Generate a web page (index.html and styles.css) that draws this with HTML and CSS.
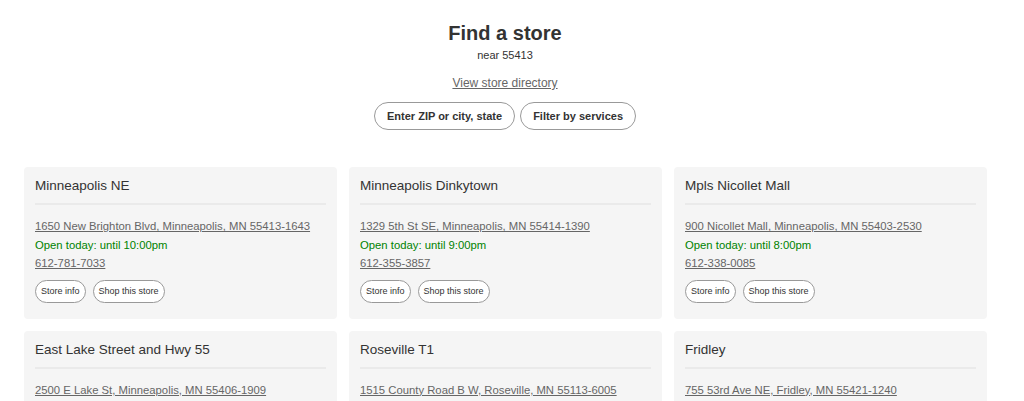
FILE: index.html
```html
<!DOCTYPE html>
<html lang="en">

<head>
    <meta charset="UTF-8">
    <meta name="viewport" content="width=device-width, initial-scale=1.0">
    <link rel="stylesheet" href="styles.css">
    <title>Find a store</title>
</head>

<body>
    <div class="page">
        <div class="header">
            <h1>Find a store</h1>
            <p class="near">near 55413</p>
            <a class="directory" href="#">View store directory</a>
            <div class="actions">
                <button class="pill">Enter ZIP or city, state</button>
                <button class="pill">Filter by services</button>
            </div>
        </div>

        <div class="stores">
            <div class="card">
                <h2>Minneapolis NE</h2>
                <a class="line" href="#">1650 New Brighton Blvd, Minneapolis, MN 55413-1643</a>
                <p class="open">Open today: until 10:00pm</p>
                <a class="line" href="#">612-781-7033</a>
                <div class="btns">
                    <button class="small">Store info</button>
                    <button class="small">Shop this store</button>
                </div>
            </div>
            <div class="card">
                <h2>Minneapolis Dinkytown</h2>
                <a class="line" href="#">1329 5th St SE, Minneapolis, MN 55414-1390</a>
                <p class="open">Open today: until 9:00pm</p>
                <a class="line" href="#">612-355-3857</a>
                <div class="btns">
                    <button class="small">Store info</button>
                    <button class="small">Shop this store</button>
                </div>
            </div>
            <div class="card">
                <h2>Mpls Nicollet Mall</h2>
                <a class="line" href="#">900 Nicollet Mall, Minneapolis, MN 55403-2530</a>
                <p class="open">Open today: until 8:00pm</p>
                <a class="line" href="#">612-338-0085</a>
                <div class="btns">
                    <button class="small">Store info</button>
                    <button class="small">Shop this store</button>
                </div>
            </div>
            <div class="card">
                <h2>East Lake Street and Hwy 55</h2>
                <a class="line" href="#">2500 E Lake St, Minneapolis, MN 55406-1909</a>
                <p class="open">Open today: until 10:00pm</p>
                <a class="line" href="#">612-721-1391</a>
                <div class="btns">
                    <button class="small">Store info</button>
                    <button class="small">Shop this store</button>
                </div>
            </div>
            <div class="card">
                <h2>Roseville T1</h2>
                <a class="line" href="#">1515 County Road B W, Roseville, MN 55113-6005</a>
                <p class="open">Open today: until 10:00pm</p>
                <a class="line" href="#">651-631-0330</a>
                <div class="btns">
                    <button class="small">Store info</button>
                    <button class="small">Shop this store</button>
                </div>
            </div>
            <div class="card">
                <h2>Fridley</h2>
                <a class="line" href="#">755 53rd Ave NE, Fridley, MN 55421-1240</a>
                <p class="open">Open today: until 10:00pm</p>
                <a class="line" href="#">763-586-0177</a>
                <div class="btns">
                    <button class="small">Store info</button>
                    <button class="small">Shop this store</button>
                </div>
            </div>
        </div>
    </div>
</body>

</html>
```

FILE: styles.css
```css
body {
    margin: 0;
    font-family: "Liberation Sans", Arial, sans-serif;
    color: #333;
    background: #fff;
}

.page {
    width: 1010px;
}

.header {
    display: flex;
    flex-direction: column;
    align-items: center;
    padding-top: 21px;
}

h1 {
    margin: 0;
    font-size: 20px;
    line-height: 24px;
    color: #333;
}

.near {
    margin: 3px 0 0;
    font-size: 11px;
    line-height: 14px;
}

.directory {
    margin-top: 14px;
    font-size: 12px;
    line-height: 14px;
    color: #666;
}

.actions {
    display: flex;
    gap: 5px;
    margin-top: 12px;
}

.pill {
    height: 28px;
    padding: 0 12px;
    border: 1px solid #999;
    border-radius: 14px;
    background: #fff;
    font-family: inherit;
    font-size: 11px;
    font-weight: bold;
    color: #333;
}

.stores {
    display: grid;
    grid-template-columns: repeat(3, 313px);
    gap: 12px;
    padding: 37px 0 0 24px;
}

.card {
    display: flex;
    flex-direction: column;
    align-items: flex-start;
    background: #f5f5f5;
    border-radius: 4px;
    padding: 10px 11px 16px;
}

h2 {
    align-self: stretch;
    margin: 0 0 12px;
    padding-bottom: 8px;
    border-bottom: 2px solid #eaeaea;
    font-size: 13.5px;
    font-weight: normal;
    line-height: 18px;
    color: #333;
}

.line {
    font-size: 11.3px;
    line-height: 18.5px;
    color: #666;
}

.open {
    margin: 0;
    font-size: 11.3px;
    line-height: 18.5px;
    color: #008300;
}

.btns {
    display: flex;
    gap: 7px;
    margin-top: 7px;
}

.small {
    height: 23px;
    padding: 0 5px;
    border: 1px solid #999;
    border-radius: 12px;
    background: #fff;
    font-family: inherit;
    font-size: 9px;
    color: #333;
}
```
